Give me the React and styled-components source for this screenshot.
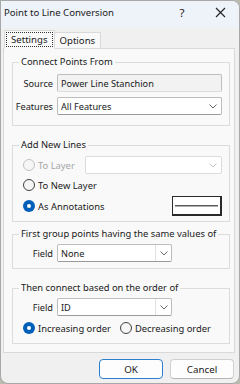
import React from 'react';
import styled, { createGlobalStyle } from 'styled-components';

const GlobalStyle = createGlobalStyle`
  html, body {
    margin: 0;
    padding: 0;
    background: #b7bcae;
  }
  body {
    font-family: "Noto Sans", "Open Sans", sans-serif;
    font-size: 9.2px;
    color: #1a1a1a;
  }
`;

const Window = styled.div`
  width: 240px;
  height: 384px;
  box-sizing: border-box;
  border: 1px solid #a8a8a8;
  border-radius: 0 8px 8px 8px;
  background: #f0f0f0;
  overflow: hidden;
  display: flex;
  flex-direction: column;
`;

const TitleBar = styled.div`
  height: 27px;
  flex: none;
  display: flex;
  align-items: center;
  padding-left: 3px;
  background: #eef2f9;
`;

const Title = styled.div`
  flex: 1;
  font-size: 9.6px;
  padding-bottom: 4px;
  white-space: nowrap;
`;

const TitleButton = styled.div`
  width: ${({ w }) => w}px;
  flex: none;
  padding-bottom: 4px;
  display: flex;
  justify-content: center;
  font-size: 11.5px;
`;

const Body = styled.div`
  flex: 1;
  display: flex;
  flex-direction: column;
  padding: 2px 4px 5px 2px;
`;

const TabStrip = styled.div`
  display: flex;
  align-items: flex-end;
  height: 19px;
  padding-left: 1px;
  margin-bottom: -1px;
  position: relative;
  z-index: 1;
`;

const Tab = styled.div`
  box-sizing: border-box;
  height: ${({ active }) => (active ? 19 : 17)}px;
  padding: ${({ active }) => (active ? '1px' : '0 5px')};
  border: 1px solid #d9d9d9;
  border-bottom: ${({ active }) => (active ? '1px solid #f9f9f9' : '1px solid #d9d9d9')};
  border-left: ${({ first }) => (first ? '1px solid #d9d9d9' : 'none')};
  background: #f9f9f9;
  display: flex;
  align-items: center;
  font-size: 9.6px;
`;

const FocusLabel = styled.span`
  height: 100%;
  box-sizing: border-box;
  border: 1px dotted #333;
  padding: 0 4px;
  display: flex;
  align-items: center;
`;

const Panel = styled.div`
  height: 305px;
  box-sizing: border-box;
  border: 1px solid #d9d9d9;
  background: #f9f9f9;
  padding: 7px 4px 0 8px;
`;

const Group = styled.fieldset`
  margin: ${({ top }) => top}px 0 0 0;
  padding: ${({ pad }) => pad};
  border: 1px solid #dcdcdc;
  min-width: 0;
`;

const Legend = styled.legend`
  margin-left: 6px;
  padding: 0 2px;
  line-height: 12px;
  font-size: 9.4px;
  white-space: nowrap;
`;

const FormGrid = styled.div`
  display: grid;
  grid-template-columns: 40px ${({ field }) => (field ? `${field}px` : '1fr')};
  column-gap: 4px;
  row-gap: 5px;
  align-items: center;
`;

const Label = styled.div`
  text-align: right;
  white-space: nowrap;
`;

const Box = styled.div`
  height: 18px;
  box-sizing: border-box;
  display: flex;
  align-items: center;
  border: 1px solid ${({ disabled }) => (disabled ? '#dcdcdc' : '#bdbdbd')};
  border-bottom-color: ${({ disabled, readOnly }) => (disabled || readOnly ? '#dcdcdc' : '#9a9a9a')};
  background: ${({ readOnly }) => (readOnly ? '#f2f2f2' : '#ffffff')};
  border-radius: 2px;
  padding-left: 3px;
  flex: ${({ grow }) => (grow ? 1 : 'none')};
`;

const BoxText = styled.span`
  flex: 1;
  white-space: nowrap;
  overflow: hidden;
`;

const Arrow = styled.div`
  width: ${({ split }) => (split ? 15 : 16)}px;
  height: 100%;
  flex: none;
  display: flex;
  align-items: center;
  justify-content: center;
  border-left: ${({ split }) => (split ? '1px solid #e2e2e2' : 'none')};
`;

const Chevron = ({ color = '#6a6a6a' }) => (
  <svg width="8" height="5" viewBox="0 0 8 5">
    <path d="M0.5 0.5 L4 4 L7.5 0.5" fill="none" stroke={color} strokeWidth="1" />
  </svg>
);

const Select = ({ value, split, disabled, grow }) => (
  <Box disabled={disabled} grow={grow}>
    <BoxText>{value}</BoxText>
    <Arrow split={split}>
      <Chevron color={disabled ? '#c4c4c4' : '#6a6a6a'} />
    </Arrow>
  </Box>
);

const RadioList = styled.div`
  display: flex;
  flex-direction: column;
  gap: 2px;
  padding-left: 10px;
  margin-top: ${({ top }) => top || 0}px;
`;

const RadioRow = styled.div`
  height: ${({ h }) => h || 18}px;
  display: flex;
  align-items: center;
  gap: ${({ gap }) => gap || 0}px;
`;

const RadioItem = styled.div`
  display: flex;
  align-items: center;
  gap: 3px;
  color: ${({ disabled }) => (disabled ? '#a6a6a6' : '#1a1a1a')};
  white-space: nowrap;
  font-size: 9.4px;
`;

const Circle = styled.span`
  width: 12px;
  height: 12px;
  box-sizing: border-box;
  border-radius: 50%;
  flex: none;
  display: flex;
  align-items: center;
  justify-content: center;
  border: ${({ checked, disabled }) =>
    checked ? 'none' : `1px solid ${disabled ? '#c2c2c2' : '#404040'}`};
  background: ${({ checked }) => (checked ? '#005fb8' : '#f6f6f6')};

  &::after {
    content: '';
    display: ${({ checked }) => (checked ? 'block' : 'none')};
    width: 4px;
    height: 4px;
    border-radius: 50%;
    background: #ffffff;
  }
`;

const Radio = ({ label, checked, disabled }) => (
  <RadioItem disabled={disabled}>
    <Circle checked={checked} disabled={disabled} />
    {label}
  </RadioItem>
);

const Spacer = styled.div`
  flex: 1;
`;

const LayerSelect = styled.div`
  width: 137px;
  margin-right: 7px;
  display: flex;
`;

const LineButton = styled.div`
  width: 50px;
  height: 20px;
  box-sizing: border-box;
  margin-right: 7px;
  border: 1px solid #2a2a2a;
  border-right-width: 2px;
  border-bottom-width: 2px;
  background: #ffffff;
  display: flex;
  align-items: center;
  padding: 0 2px;

  &::before {
    content: '';
    flex: 1;
    height: 1px;
    background: #5a5a5a;
    box-shadow: 0 1px 0 #b0b0b0;
  }
`;

const ButtonRow = styled.div`
  display: flex;
  justify-content: flex-end;
  gap: 7px;
  margin-top: 6px;
  padding-right: 1px;
`;

const Button = styled.div`
  width: 64px;
  height: 20px;
  box-sizing: border-box;
  border: 1px solid ${({ primary }) => (primary ? '#2f7fd0' : '#d0d0d0')};
  border-bottom-color: ${({ primary }) => (primary ? '#2f7fd0' : '#b5b5b5')};
  border-radius: 4px;
  background: #fdfdfd;
  display: flex;
  align-items: center;
  justify-content: center;
  font-size: 9.8px;
`;

const App = () => (
  <>
    <GlobalStyle />
    <Window>
      <TitleBar>
        <Title>Point to Line Conversion</Title>
        <TitleButton w={20}>?</TitleButton>
        <TitleButton w={17} />
        <TitleButton w={22}>
          <svg width="11" height="11" viewBox="0 0 11 11">
            <path d="M1 1 L10 10 M10 1 L1 10" stroke="#222" strokeWidth="1.1" />
          </svg>
        </TitleButton>
        <TitleButton w={8} />
      </TitleBar>
      <Body>
        <TabStrip>
          <Tab active first>
            <FocusLabel>Settings</FocusLabel>
          </Tab>
          <Tab>Options</Tab>
        </TabStrip>
        <Panel>
          <Group top={0} pad="6px 7px 10px 0">
            <Legend>Connect Points From</Legend>
            <FormGrid>
              <Label>Source</Label>
              <Box readOnly>
                <BoxText>Power Line Stanchion</BoxText>
              </Box>
              <Label>Features</Label>
              <Select value="All Features" />
            </FormGrid>
          </Group>

          <Group top={13} pad="5px 0 5px 0">
            <Legend>Add New Lines</Legend>
            <RadioList>
              <RadioRow>
                <Radio label="To Layer" disabled />
                <Spacer />
                <LayerSelect>
                  <Select value="" disabled grow />
                </LayerSelect>
              </RadioRow>
              <RadioRow>
                <Radio label="To New Layer" />
              </RadioRow>
              <RadioRow h={20}>
                <Radio label="As Annotations" checked />
                <Spacer />
                <LineButton />
              </RadioRow>
            </RadioList>
          </Group>

          <Group top={6} pad="4px 0 6px 0">
            <Legend>First group points having the same values of</Legend>
            <FormGrid field={115}>
              <Label>Field</Label>
              <Select value="None" split />
            </FormGrid>
          </Group>

          <Group top={13} pad="4px 0 8px 0">
            <Legend>Then connect based on the order of</Legend>
            <FormGrid field={115}>
              <Label>Field</Label>
              <Select value="ID" split />
            </FormGrid>
            <RadioList top={5}>
              <RadioRow h={14} gap={9}>
                <Radio label="Increasing order" checked />
                <Radio label="Decreasing order" />
              </RadioRow>
            </RadioList>
          </Group>
        </Panel>
        <ButtonRow>
          <Button primary>OK</Button>
          <Button>Cancel</Button>
        </ButtonRow>
      </Body>
    </Window>
  </>
);

export default App;
